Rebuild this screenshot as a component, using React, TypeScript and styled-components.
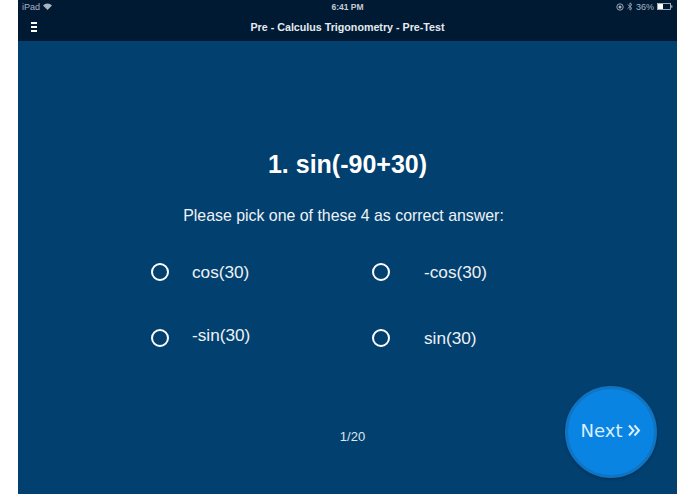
import React from 'react'
import styled, {createGlobalStyle} from 'styled-components'

const GlobalStyle = createGlobalStyle`
    html, body {
        margin: 0;
        padding: 0;
        height: 100%;
        background: #ffffff;
        overflow: hidden;
    }
`

const Screen = styled.div`
    position: relative;
    display: flex;
    flex-direction: column;
    width: 659px;
    height: 494px;
    margin-left: 18px;
    background: #02406f;
    color: #ffffff;
    font-family: "Liberation Sans", Arial, sans-serif;
`

const Header = styled.header`
    height: 41px;
    background: #001a34;
    flex-shrink: 0;
`

const StatusBar = styled.div`
    display: grid;
    grid-template-columns: 1fr auto 1fr;
    align-items: center;
    height: 13px;
    padding: 0 4px;
    font-size: 9px;
    color: #a9b4c0;
`

const StatusLeft = styled.div`
    display: flex;
    align-items: center;
    gap: 3px;
`

const StatusRight = styled.div`
    display: flex;
    align-items: center;
    justify-content: flex-end;
    gap: 3px;
`

const Clock = styled.span`
    font-size: 8.5px;
    font-weight: bold;
    color: #c4ccd4;
`

const NavBar = styled.div`
    position: relative;
    display: flex;
    align-items: center;
    justify-content: center;
    height: 28px;
`

const MenuIcon = styled.div`
    position: absolute;
    left: 13px;
    top: 9px;
    width: 6px;
    height: 10px;
    background: repeating-linear-gradient(
        to bottom,
        #ffffff 0,
        #ffffff 2px,
        transparent 2px,
        transparent 4px
    );
`

const NavTitle = styled.h1`
    margin: 0;
    font-size: 10.7px;
    font-weight: bold;
    color: #e6ebf0;
`

const Question = styled.h2`
    margin: 108px 0 0;
    height: 30px;
    line-height: 30px;
    text-align: center;
    font-size: 25px;
    font-weight: bold;
`

const Prompt = styled.p`
    margin: 27px 0 0;
    padding-right: 8px;
    height: 20px;
    line-height: 20px;
    text-align: center;
    font-size: 15.9px;
    color: #eef2f6;
`

const Options = styled.div`
    display: grid;
    grid-template-columns: 221px 221px;
    grid-auto-rows: 66px;
    margin-top: 13px;
    padding-left: 133px;
`

const Option = styled.label<{$gap: number}>`
    display: flex;
    align-items: center;
    gap: ${p => p.$gap}px;
    height: 66px;
    font-size: 17.2px;
    color: #eef2f6;
`

const Radio = styled.span`
    width: 18px;
    height: 18px;
    box-sizing: border-box;
    border: 2px solid #ffffff;
    border-radius: 50%;
    flex-shrink: 0;
`

const OptionText = styled.span<{$lift?: number}>`
    transform: translateY(-${p => p.$lift ?? 0}px);
`

const Progress = styled.div`
    margin-top: 58px;
    padding-left: 10px;
    text-align: center;
    font-size: 13px;
    color: #dfe6ec;
`

const NextButton = styled.button`
    position: absolute;
    left: 547px;
    top: 386px;
    display: flex;
    align-items: center;
    justify-content: center;
    gap: 6px;
    width: 92px;
    height: 92px;
    padding: 0 0 4px;
    box-sizing: border-box;
    border: 3px solid #0f74c2;
    border-radius: 50%;
    background: #0a84e2;
    color: #d8efff;
    font-family: "DejaVu Sans", Verdana, sans-serif;
    font-size: 18px;
    box-shadow: 0 1px 3px rgba(0, 20, 50, 0.4);
`

const App: React.FC = () => {
    return (
        <>
            <GlobalStyle/>
            <Screen>
                <Header>
                    <StatusBar>
                        <StatusLeft>
                            iPad
                            <svg width="9" height="7" viewBox="0 0 9 7" aria-hidden="true">
                                <path d="M4.5 7 L0 2.4 A6.4 6.4 0 0 1 9 2.4 Z" fill="#a9b4c0"/>
                            </svg>
                        </StatusLeft>
                        <Clock>6:41 PM</Clock>
                        <StatusRight>
                            <svg width="8" height="8" viewBox="0 0 8 8" aria-hidden="true">
                                <circle cx="4" cy="4" r="3.2" fill="none" stroke="#a9b4c0" strokeWidth="0.9"/>
                                <circle cx="4" cy="4" r="1.5" fill="#a9b4c0"/>
                            </svg>
                            <svg width="6" height="9" viewBox="0 0 6 9" aria-hidden="true">
                                <path d="M0.6 2.4 L5 6.4 L3 8.2 V0.8 L5 2.6 L0.6 6.6" fill="none" stroke="#a9b4c0" strokeWidth="0.8"/>
                            </svg>
                            <span>36%</span>
                            <svg width="16" height="7" viewBox="0 0 16 7" aria-hidden="true">
                                <rect x="0.5" y="0.5" width="13" height="6" fill="none" stroke="#c4ccd4" strokeWidth="0.8"/>
                                <rect x="1" y="1" width="5" height="5" fill="#ffffff"/>
                                <rect x="14.3" y="2.3" width="1" height="2.4" fill="#c4ccd4"/>
                            </svg>
                        </StatusRight>
                    </StatusBar>
                    <NavBar>
                        <MenuIcon/>
                        <NavTitle>Pre - Calculus Trigonometry - Pre-Test</NavTitle>
                    </NavBar>
                </Header>
                <Question>1. sin(-90+30)</Question>
                <Prompt>Please pick one of these 4 as correct answer:</Prompt>
                <Options>
                    <Option $gap={23}><Radio/><OptionText>cos(30)</OptionText></Option>
                    <Option $gap={34}><Radio/><OptionText>-cos(30)</OptionText></Option>
                    <Option $gap={23}><Radio/><OptionText $lift={3}>-sin(30)</OptionText></Option>
                    <Option $gap={34}><Radio/><OptionText>sin(30)</OptionText></Option>
                </Options>
                <Progress>1/20</Progress>
                <NextButton type="button">
                    Next
                    <svg width="13" height="13" viewBox="0 0 13 13" aria-hidden="true">
                        <path d="M1 1.5 L5.5 6.5 L1 11.5 M6.5 1.5 L11 6.5 L6.5 11.5" fill="none" stroke="#d8efff" strokeWidth="2"/>
                    </svg>
                </NextButton>
            </Screen>
        </>
    )
}

export default App
